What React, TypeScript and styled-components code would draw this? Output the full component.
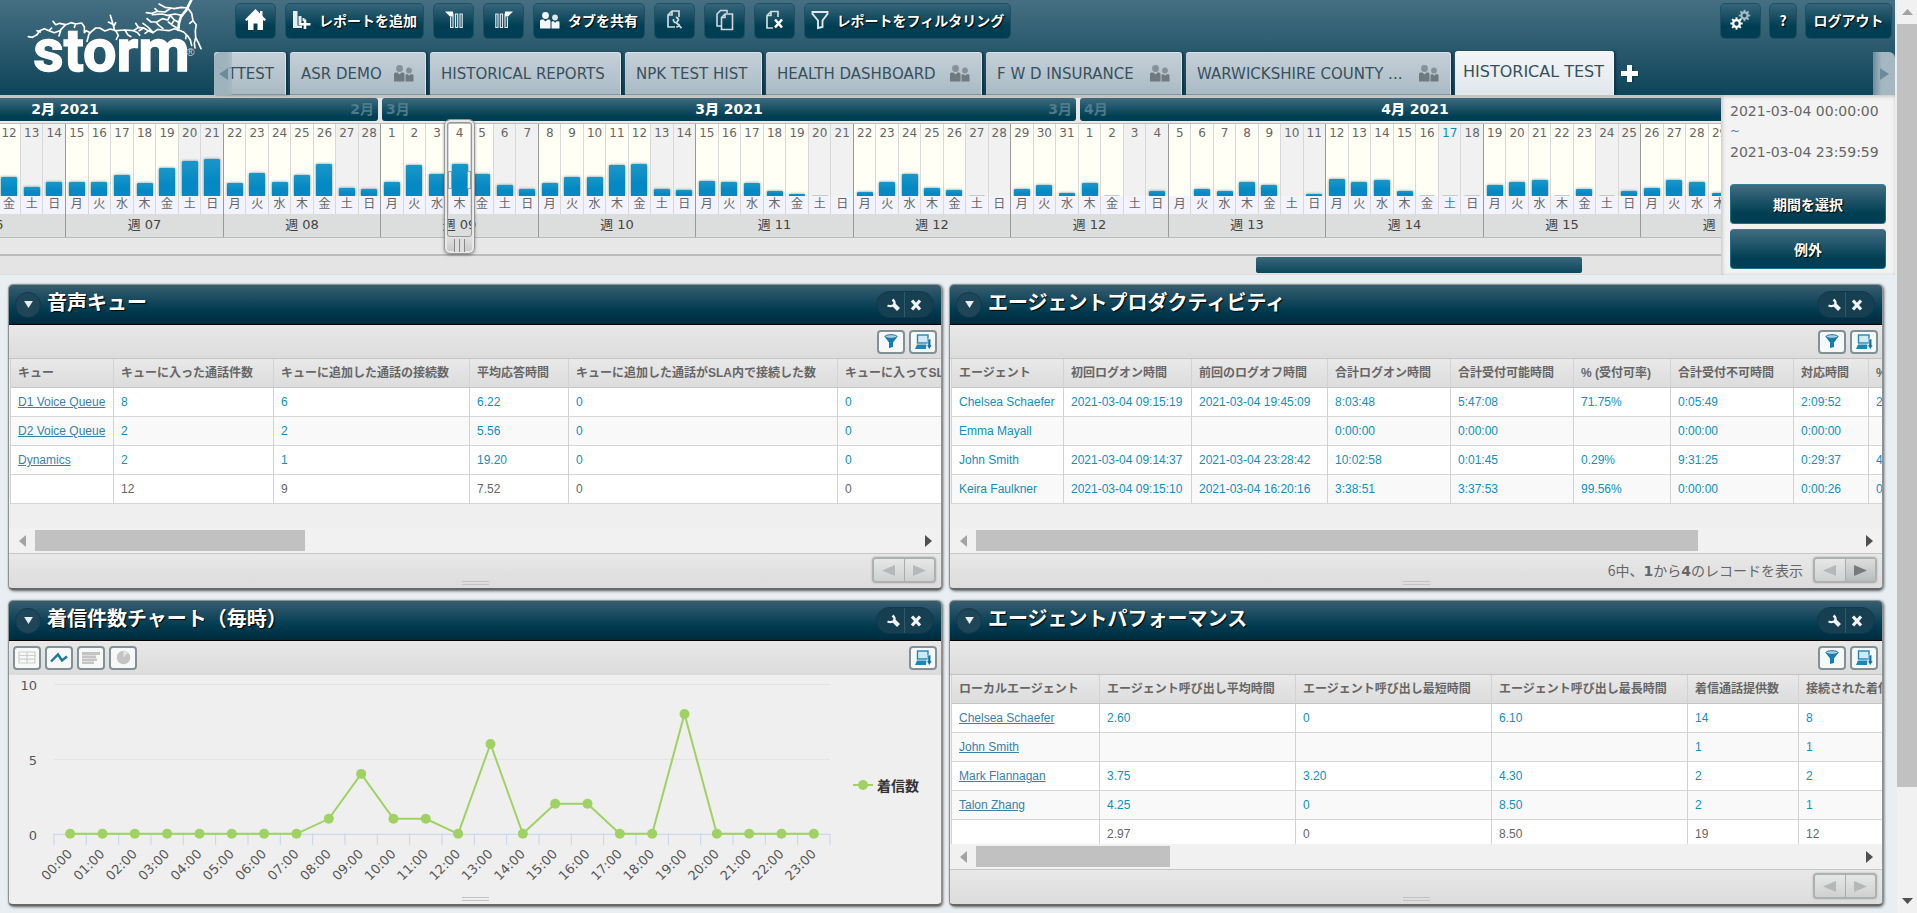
import React from "react";
import styled, { createGlobalStyle, css } from "styled-components";

const uiFont = `"DejaVu Sans", "Noto Sans CJK JP", sans-serif`;
const jpFont = `"Noto Sans CJK JP", "DejaVu Sans", sans-serif`;
const cellFont = `"Liberation Sans", "Noto Sans CJK JP", sans-serif`;

const GlobalStyle = createGlobalStyle`
  * { box-sizing: border-box; }
  body { margin: 0; background: #e9eef2; font-family: ${uiFont}; color: #666; overflow: hidden; }
  button { font: inherit; cursor: pointer; margin: 0; padding: 0; }
  svg { display: block; }
`;

/* ---------- page frame ---------- */

const Page = styled.div`
  display: flex;
  height: 100vh;
  overflow: hidden;
`;

const Main = styled.div`
  flex: 1;
  min-width: 0;
  padding-right: 2px;
`;

const PageScroll = styled.div`
  flex: none;
  width: 20px;
  display: flex;
  flex-direction: column;
  align-items: center;
  background: #f1f1f1;
`;

const PageThumb = styled.div`
  width: 100%;
  flex: 763;
  background: #c1c1c1;
`;

const PageRest = styled.div`
  flex: 102;
`;

const ScrollArrow = styled.button<{ $dim?: boolean }>`
  flex: none;
  width: 20px;
  height: 24px;
  display: grid;
  place-items: center;
  border: 0;
  background: none;
  color: ${(p) => (p.$dim ? "#a3a3a3" : "#505050")};
`;

/* ---------- header ---------- */

const Header = styled.header`
  display: flex;
  height: 95px;
  background: linear-gradient(#466f82, #0e4459);
`;

const LogoBox = styled.a`
  flex: none;
  width: 214px;
  padding-left: 25px;
`;

const HeaderBody = styled.div`
  flex: 1;
  min-width: 0;
  display: flex;
  flex-direction: column;
  justify-content: space-between;
`;

const Toolbar = styled.div`
  display: flex;
  gap: 8px;
  padding: 3px 3px 0 21px;
`;

const Spacer = styled.div`
  flex: 1;
`;

const ToolButton = styled.button<{ $w: number }>`
  width: ${(p) => p.$w}px;
  height: 36px;
  display: flex;
  align-items: center;
  justify-content: center;
  gap: 8px;
  padding-bottom: 2px;
  border: 1px solid #1e4f63;
  border-radius: 5px;
  background: linear-gradient(#38657a, #003f53 65%);
  color: #fff;
  font: bold 14px/20px ${jpFont};
  text-shadow: 1px 1px 1px #000;
  white-space: nowrap;
`;

const ToolGroup = styled.div`
  display: flex;
  gap: 9px;
`;

const TabRow = styled.nav`
  display: flex;
  align-items: flex-end;
  gap: 4px;
  height: 44px;
`;

const TabFirst = styled.div`
  position: relative;
`;

const Tab = styled.button<{ $w: number; $active?: boolean; $end?: boolean }>`
  flex: none;
  width: ${(p) => p.$w}px;
  height: 43px;
  display: flex;
  align-items: center;
  justify-content: ${(p) => (p.$end ? "flex-end" : "space-between")};
  padding: 0 11px;
  border: 0;
  border-top: 1px solid #dbe3e8;
  border-bottom: 1px solid #7f97a3;
  border-right: 1px solid #dbe3e8;
  border-radius: 3px 3px 0 0;
  background: linear-gradient(#c5d0d8, #a9bac4);
  box-shadow: 2px 0 2px rgba(0, 30, 45, 0.5);
  color: #38505c;
  font: 15px/20px ${uiFont};
  white-space: nowrap;
  ${(p) =>
    p.$active &&
    css`
      height: 44px;
      padding: 0 8px 4px;
      background: linear-gradient(#f3f6f8, #dfe7eb);
      border-color: #fff;
      border-bottom: 0;
      font-size: 16px;
    `}
`;

const TabArrowLeft = styled.button`
  position: absolute;
  left: 0;
  top: 0;
  width: 18px;
  height: 43px;
  display: grid;
  place-items: center;
  border: 0;
  border-radius: 6px 0 0 0;
  background: linear-gradient(90deg, #9fb3bd 70%, rgba(159, 179, 189, 0.6));
  color: #6c8c9b;
`;

const TabArrowRight = styled.button`
  width: 22px;
  height: 43px;
  display: grid;
  place-items: center;
  border: 0;
  border-radius: 0 6px 0 0;
  background: linear-gradient(90deg, #6d8c9b, #a5b8c1 40%);
  color: #6c8c9b;
`;

const AddTab = styled.button`
  height: 42px;
  width: 24px;
  display: grid;
  place-items: center;
  border: 0;
  background: none;
`;

/* ---------- timeline ---------- */

const TimeArea = styled.section`
  display: flex;
  height: 180px;
`;

const Timeline = styled.div`
  flex: 1;
  min-width: 0;
  overflow: hidden;
  background: #e7e7e7;
  border-top: 3px solid #c4c4c4;
  display: flex;
  flex-direction: column;
`;

const Months = styled.div`
  display: grid;
  grid-template-columns: 378fr 694fr 641fr;
  gap: 4px;
  height: 23px;
`;

const Month = styled.div`
  overflow: hidden;
  border-radius: 3px;
  background: linear-gradient(#3d6a7e, #003f53 80%);
  display: flex;
  justify-content: flex-end;
  &:nth-child(3) { justify-content: flex-start; border-radius: 3px 0 0 3px; }
  &:nth-child(1) { border-radius: 0 3px 3px 0; }
`;

const MonthInner = styled.div<{ $w?: number }>`
  flex: ${(p) => (p.$w ? "none" : "1")};
  width: ${(p) => (p.$w ? p.$w + "px" : "auto")};
  display: flex;
  justify-content: space-between;
  padding: 0 4px;
  color: #4f7b8c;
  font: bold 14px/22px ${uiFont};
  b { color: #fff; }
`;

const Weeks = styled.div`
  display: grid;
  grid-template-columns: 65fr 158fr 157fr 158fr 157fr 158fr 157fr 158fr 157fr 158fr 157fr 81fr;
  height: 115px;
  margin-top: 2px;
  border-top: 1px solid #bbb;
  border-bottom: 1px solid #bbb;
`;

const Week = styled.div<{ $clip?: "start" | "end" }>`
  min-width: 0;
  display: flex;
  justify-content: ${(p) => (p.$clip === "end" ? "flex-end" : "flex-start")};
  ${(p) => p.$clip && "overflow: hidden;"}
`;

const WeekInner = styled.div<{ $fixed?: boolean }>`
  flex: ${(p) => (p.$fixed ? "none" : "1")};
  width: ${(p) => (p.$fixed ? "158px" : "auto")};
  min-width: 0;
  display: flex;
  flex-direction: column;
  border-left: 1px solid #999;
`;

const Days = styled.div`
  flex: 1;
  display: flex;
`;

const Day = styled.div<{ $off?: boolean; $today?: boolean }>`
  position: relative;
  flex: 1;
  min-width: 0;
  display: flex;
  flex-direction: column;
  align-items: center;
  background: ${(p) => (p.$off ? "#f1f1f1" : "#fffff5")};
  color: ${(p) => (p.$today ? "#0a8ec4" : "#666")};
  border-right: 1px solid #d8d8d8;
  font: 12px/18px ${uiFont};
  &:last-child { border-right: 0; }
`;

const BarSlot = styled.div`
  flex: 1;
  display: flex;
  align-items: flex-end;
  overflow: hidden;
  padding: 0 2px;
`;

const Bar = styled.div<{ $empty: boolean }>`
  width: 16px;
  min-height: 1px;
  border-radius: 1px 1px 0 0;
  background: ${(p) => (p.$empty ? "#c3cbcd" : "linear-gradient(#1b97c8, #0489c4 60%)")};
  box-shadow: ${(p) => (p.$empty ? "none" : "0 0 3px rgba(0, 60, 80, 0.6)")};
`;

const DayName = styled.div`
  align-self: stretch;
  background: #f3f3fd;
  text-align: center;
  line-height: 17px;
  height: 18px;
`;

const WeekName = styled.div`
  height: 23px;
  background: #dcdddd;
  text-align: center;
  color: #444;
  font: 13px/22px ${uiFont};
`;

/* selection window that floats over the day it picks */
const Picker = styled.div`
  position: absolute;
  z-index: 2;
  top: -5px;
  left: -5px;
  right: -5px;
  height: 135px;
  border: 1px solid #999;
  border-radius: 6px;
  background: linear-gradient(transparent 117px, #e2e2e2 117px, #c6c6c6);
  box-shadow: 0 1px 3px rgba(0, 0, 0, 0.4), inset 0 0 0 2px #e9e9e9;
  display: flex;
  flex-direction: column;
  align-items: center;
  justify-content: space-between;
`;

const PickerWindow = styled.div`
  align-self: stretch;
  height: 116px;
  margin: 2px;
  border: 1px solid #999;
  border-radius: 3px;
  display: flex;
  align-items: center;
  justify-content: space-between;
`;

const SideGrip = styled.i`
  width: 4px;
  height: 18px;
  border: 1px solid #999;
  background: #eee;
`;

const Grip = styled.i`
  width: 11px;
  height: 13px;
  margin-bottom: 1px;
  background: repeating-linear-gradient(90deg, #888 0 1px, #ddd 1px 5px);
`;

const SlideTrack = styled.div`
  height: 21px;
  margin-top: auto;
  padding: 1px 0 2px 73%;
  border-top: 2px solid #bbb;
  border-bottom: 1px solid #ddd;
  background: #e4e4e4;
`;

const SlideThumb = styled.div`
  width: 70%;
  height: 16px;
  border-radius: 2px;
  background: linear-gradient(#3a677b, #0b475c);
`;

const RangePanel = styled.aside`
  flex: none;
  width: 174px;
  padding: 4px 9px 0;
  background: #f3f3f3;
  box-shadow: inset 1px 1px 4px #bbb;
  font-size: 14px;
  line-height: 24px;
  white-space: nowrap;
`;

const Tilde = styled.div`
  font-size: 12px;
  line-height: 17px;
  color: #4f7fae;
`;

const RangeButtons = styled.div`
  display: grid;
  gap: 5px;
  margin-top: 20px;
`;

const RangeButton = styled.button`
  height: 40px;
  border: 1px solid #1f7088;
  border-top-color: #2f7f97;
  border-radius: 4px;
  background: linear-gradient(#426c80, #003f53 75%);
  color: #fff;
  font: bold 14px/20px ${jpFont};
  text-shadow: 1px 1px 1px #000;
`;

/* ---------- panels ---------- */

const Board = styled.main`
  display: grid;
  grid-template-columns: minmax(0, 1fr) minmax(0, 1fr);
  gap: 10px 7px;
  padding: 9px 12px 0 8px;
`;

const Panel = styled.section`
  display: flex;
  flex-direction: column;
  height: 306px;
  overflow: hidden;
  border: 1px solid #8b9396;
  border-bottom: 2px solid #666;
  border-radius: 5px;
  background: #efefef;
  box-shadow: 1px 1px 3px rgba(0, 0, 0, 0.6);
`;

const PanelHead = styled.header`
  flex: none;
  display: flex;
  align-items: center;
  height: 40px;
  padding: 0 7px 0 6px;
  border-bottom: 1px solid #000;
  background: linear-gradient(#385d70, #003b50 65%, #002b3e);
`;

const RoundButton = styled.button`
  width: 26px;
  height: 26px;
  display: grid;
  place-items: center;
  border: 1px solid #12384a;
  border-radius: 50%;
  background: #1f4658;
`;

const PanelTitle = styled.h2`
  flex: 1;
  margin: 0 0 5px 6px;
  color: #fff;
  font: bold 20px/28px ${jpFont};
  text-shadow: 1px 1px 1px #000;
  white-space: nowrap;
`;

const Pill = styled.div`
  display: flex;
  width: 58px;
  height: 27px;
  border: 1px solid #12384a;
  border-radius: 14px;
  background: #173f52;
`;

const PillButton = styled.button`
  flex: 1;
  display: grid;
  place-items: center;
  border: 0;
  background: none;
  & + & { border-left: 1px solid #35596a; padding-right: 6px; }
  &:first-child { padding-left: 5px; }
`;

const PanelTools = styled.div<{ $line?: boolean }>`
  flex: none;
  display: flex;
  align-items: center;
  gap: 4px;
  height: 34px;
  padding: 0 4px;
  border-bottom: 1px solid ${(p) => (p.$line ? "#c3c3c3" : "#dcdcdc")};
  background: linear-gradient(#e8e8e8, #dcdcdc);
`;

const IconButton = styled.button`
  width: 28px;
  height: 24px;
  display: grid;
  place-items: center;
  border: 2px solid #839196;
  border-radius: 4px;
  background: #f7f8f8;
`;

const TableWrap = styled.div`
  flex: 1;
  min-height: 0;
  overflow: hidden;
  padding-left: 1px;
`;

const DataTable = styled.table<{ $w: number }>`
  width: ${(p) => p.$w}px;
  table-layout: fixed;
  border-collapse: separate;
  border-spacing: 0;
  border-left: 1px solid #d2d2d2;
`;

const cell = css`
  height: 29px;
  padding: 0 7px;
  text-align: left;
  white-space: nowrap;
  overflow: hidden;
  border-right: 1px solid #d2d2d2;
  border-bottom: 1px solid #d6d6d6;
`;

const Th = styled.th`
  ${cell}
  background: linear-gradient(#e9e9e9, #dcdcdc);
  border-bottom-color: #c6c6c6;
  color: #666;
  font: bold 12px/18px ${cellFont};
`;

const Td = styled.td<{ $total?: boolean }>`
  ${cell}
  color: ${(p) => (p.$total ? "#666" : "#0f8fc3")};
  font: 12px/18px ${cellFont};
`;

const Tr = styled.tr<{ $alt?: boolean }>`
  background: ${(p) => (p.$alt ? "#f9f9f9" : "#fff")};
`;

const CellLink = styled.a`
  color: #3a80ad;
  text-decoration: underline;
`;

const HScroll = styled.div`
  flex: none;
  display: flex;
  align-items: center;
  height: 25px;
  background: #f1f1f1;
`;

const HTrack = styled.div`
  flex: 1;
  height: 21px;
`;

const HThumb = styled.div<{ $pct: number }>`
  width: ${(p) => p.$pct}%;
  height: 21px;
  background: #c1c1c1;
`;

const HArrow = styled(ScrollArrow)`
  width: 26px;
  height: 21px;
`;

const PanelFoot = styled.footer`
  flex: none;
  display: grid;
  grid-template-columns: 1fr auto 1fr;
  align-items: center;
  height: 35px;
  padding: 0 5px 2px;
  border-top: 1px solid #c6c6c6;
  background: linear-gradient(#e8e8e8, #dcdcdc);
`;

const GripBox = styled.div`
  display: grid;
  place-items: end center;
  height: 30px;
`;

const ResizeGrip = styled.div`
  width: 27px;
  height: 4px;
  border: solid #c3c3c3;
  border-width: 1px 0;
`;

const PageInfo = styled.div`
  display: flex;
  align-items: center;
  justify-content: flex-end;
  gap: 10px;
  grid-column: 3;
  color: #666;
  font: 14px/20px ${jpFont};
  b { font-family: ${uiFont}; }
`;

const Pager = styled.div`
  display: flex;
  width: 64px;
  height: 26px;
  border: 2px solid #adb1b2;
  border-radius: 4px;
  background: linear-gradient(#e6e7e7, #cfd1d1);
  box-shadow: 0 0 2px #aaa;
`;

const PagerButton = styled.button<{ $on?: boolean }>`
  flex: 1;
  display: grid;
  place-items: center;
  border: 0;
  background: ${(p) => (p.$on ? "linear-gradient(#dcdede, #b9bcbd)" : "none")};
  color: ${(p) => (p.$on ? "#767a7c" : "#b5b8b9")};
  & + & { border-left: 1px solid #a9adae; }
`;

const ChartBody = styled.div`
  flex: 1;
  min-height: 0;
  display: flex;
  flex-direction: column;
  align-items: center;
  justify-content: space-between;
  padding-bottom: 3px;
`;

const ChartRow = styled.div`
  align-self: stretch;
  display: flex;
`;

const ChartBox = styled.div`
  flex: 1;
  min-width: 0;
`;

const Legend = styled.div`
  display: flex;
  align-items: center;
  gap: 4px;
  padding: 4px 22px 0 5px;
  color: #333;
  font: bold 14px/20px ${jpFont};
`;

/* ---------- icons ---------- */

const Tri = ({ dir, w = 7, h = 12 }: { dir: "l" | "r" | "u" | "d"; w?: number; h?: number }) => {
  const pts = {
    l: `${w},0 0,${h / 2} ${w},${h}`,
    r: `0,0 ${w},${h / 2} 0,${h}`,
    u: `0,${h} ${w / 2},0 ${w},${h}`,
    d: `0,0 ${w},0 ${w / 2},${h}`,
  }[dir];
  return (
    <svg width={w} height={h} fill="currentColor" aria-hidden="true">
      <polygon points={pts} />
    </svg>
  );
};

const HomeIcon = () => (
  <svg width="21" height="22" viewBox="0 0 21 22" fill="#fff">
    <path d="M10.500 0 L0 10.500 L1.500 12 L3 11 V21 H8.500 V14.500 H12.500 V21 H18 V11 L19.500 12 L21 10.500 L17.500 7 V2 H15 V4.500 Z" />
  </svg>
);

const AddReportIcon = () => (
  <svg width="19" height="20" viewBox="0 0 19 20" fill="#e8eef0">
    <path d="M1 1h4.500v17h-4.500z M6.500 6h3v9h-3z M1 15.500h9v2.500h-9z M10.500 8h2v3h-2z" />
    <path d="M13 9.500v9.500 M8.500 14.200h10" stroke="#fff" strokeWidth="2.600" fill="none" />
  </svg>
);

const ColumnsIcon = ({ flip }: { flip?: boolean }) => (
  <svg width="20" height="20" viewBox="0 0 20 20">
    <g transform={flip ? "matrix(-1 0 0 1 20 0)" : undefined}>
      <path d="M1 1.500h8v5h-3z" fill="#fff" />
      <path d="M6.600 7v10.500h2.400v-14 M11.500 4h2.200v13.500h-2.200z M16 4h2.200v13.500h-2.200z" fill="none" stroke="#dfe7ea" strokeWidth="1.200" />
    </g>
  </svg>
);

const PeopleIcon = ({ dark }: { dark?: boolean }) => (
  <svg width="20" height="17" viewBox="0 0 20 17" fill={dark ? "#6f7a80" : "#f4f6f7"}>
    <circle cx="5.500" cy="3.500" r="3.400" opacity={dark ? 0.7 : 1} />
    <path d="M0 9q0-1.500 1.500-1.500h2l2 2 2-2h1.500q1.500 0 1.500 1.500v7.500h-10.500z" />
    <circle cx="15" cy="5.500" r="2.900" opacity={dark ? 0.7 : 0.9} />
    <path d="M11.500 10.500q0-1.300 1.300-1.300h1l1.400 1.600 1.400-1.600h1.400q1.500 0 1.500 1.300v6h-8z" />
  </svg>
);

const PageToolIcon = () => (
  <svg width="18" height="22" viewBox="0 0 18 22" fill="none" stroke="#cfdadf" strokeWidth="1.700">
    <path d="M9 18H2V6L6 2H13V8 M6 2V6H2" />
    <path d="M7.500 10q-.5 3.500 3 3.800l5 5.400 M10.500 13.800l2-3q-.5-2.500-2.800-2.500 M10.500 18.500l3-3.500" />
  </svg>
);

const PagesIcon = () => (
  <svg width="20" height="22" viewBox="0 0 20 22" fill="none" stroke="#cfdadf" strokeWidth="1.600">
    <path d="M6 17H2V5L5.500 1.500H12V4" />
    <path d="M6.500 8.500L10 5H17.500V20.500H6.500Z M10 5V8.500H6.500" />
  </svg>
);

const PageDeleteIcon = () => (
  <svg width="19" height="20" viewBox="0 0 19 20" fill="none" stroke="#cfdadf" strokeWidth="1.700">
    <path d="M8 18H2V5.500L6 1.500H13V7 M6 1.500V5.500H2" />
    <path d="M10 9.500l7 8 M17 9.500l-7 8" stroke="#fff" strokeWidth="2.600" />
  </svg>
);

const FunnelIcon = () => (
  <svg width="18" height="20" viewBox="0 0 18 20" fill="none" stroke="#e2e8ea" strokeWidth="1.900">
    <path d="M1.500 2H16.500V4L11.500 10.500V17L7 18V10.500L1.500 4Z" />
  </svg>
);

const Gear = ({ x, y, r, color }: { x: number; y: number; r: number; color: string }) => (
  <g transform={`translate(${x} ${y})`} stroke={color} fill="none">
    <circle r={r * 0.6} strokeWidth={r * 0.42} />
    {[0, 45, 90, 135, 180, 225, 270, 315].map((a) => (
      <path key={a} d={`M0 ${-r * 0.7}V${-r * 1.1}`} strokeWidth={r * 0.34} transform={`rotate(${a})`} />
    ))}
  </g>
);

const GearsIcon = () => (
  <svg width="21" height="22" viewBox="0 0 21 22">
    <Gear x={14.5} y={6.5} r={5.2} color="#a9bcc5" />
    <Gear x={6.5} y={14.5} r={5.6} color="#fff" />
  </svg>
);

const PlusIcon = () => (
  <svg width="20" height="20" viewBox="0 0 20 20">
    <path d="M8 3h6v5h5v5h-5v5h-6v-5h-5v-5h5z" fill="#0a3040" opacity=".6" />
    <path d="M7 1h5v6h6v5h-6v6h-5v-6h-6v-5h6z" fill="#fff" />
  </svg>
);

const WrenchIcon = () => (
  <svg width="15" height="14" viewBox="0 0 15 14" fill="none" stroke="#f2f2f2">
    <path d="M6.500 1.500Q10 4.500 7.600 7Q5.500 9 1.500 7.500" strokeWidth="2.400" />
    <path d="M8 7L12.500 11.500" strokeWidth="4" />
  </svg>
);

const CrossIcon = () => (
  <svg width="12" height="12" viewBox="0 0 12 12">
    <path d="M2 1.500l8 9 M10 1.500l-8 9" stroke="#f2f2f2" strokeWidth="3.200" />
  </svg>
);

const BlueFunnel = () => (
  <svg width="14" height="15" viewBox="0 0 14 15">
    <path d="M.5 2.500L5 8.500V14L9 13V8.500L13.500 2.500z" fill="#0f7fb4" />
    <ellipse cx="7" cy="2.500" rx="6" ry="1.800" fill="#9fd3ea" stroke="#2b6f93" />
  </svg>
);

const ExportIcon = () => (
  <svg width="17" height="16" viewBox="0 0 17 16">
    <rect x="2.500" y="1" width="10.500" height="8" fill="#cfe9f5" stroke="#2586b3" strokeWidth="1.400" />
    <path d="M2 10.500h9.500l-.5 4.500H0z" fill="#1a86ba" />
    <path d="M12.800 5h3v6h1.200l-2.700 4.500L11.600 11h1.200z" fill="#0b73a8" stroke="#f7f8f8" strokeWidth=".6" />
  </svg>
);

const GridIcon = () => (
  <svg width="18" height="13" viewBox="0 0 18 13" fill="none" stroke="#cdcdcd" strokeWidth="1.200">
    <path d="M1 1h16v11H1z M1 4.500h16 M1 8.200h16 M9 1v11" />
  </svg>
);

const LineIcon = () => (
  <svg width="18" height="12" viewBox="0 0 18 12" fill="none" stroke="#1c789f" strokeWidth="2.400">
    <path d="M1 9.500L8 2.500L12 8.500L17 4.500" />
  </svg>
);

const BarsIcon = () => (
  <svg width="18" height="12" viewBox="0 0 18 12" fill="#c4c4c4">
    <path d="M0 0h18v3H0z M0 3.500h14v2.500H0z M0 6.500h15v2.500H0z M0 9.500h12v2.500H0z" />
  </svg>
);

const PieIcon = () => (
  <svg width="15" height="15" viewBox="0 0 15 15">
    <circle cx="7.500" cy="7.500" r="6.800" fill="#c4c4c4" />
    <path d="M7.500 7.500V.7a6.800 6.800 0 0 1 4.500 1.800z" fill="#e3e3e3" />
  </svg>
);

const Logo = () => (
  <svg width="180" height="80" viewBox="0 0 540 240" role="img" aria-label="storm">
    <g fill="none" stroke="#fff" strokeLinejoin="round" strokeLinecap="round">
      <path strokeWidth="8" d="M499 0L492 14L484 30L468 50L462 68L460 90" />
      <path
        strokeWidth="5"
        d="M460 90L448 86L432 92L412 90L398 88L384 98L370 92L356 84L340 82L326 92L300 90L272 92L256 87L240 93L224 84L212 84L200 94L192 102L186 124"
      />
      <path strokeWidth="5" d="M488 24L500 40L504 62L514 74L511 92L512 112L520 128L528 146M512 112L508 130L510 144M460 90L476 96L488 108L496 120L500 136M484 104L482 116M504 62L494 70" />
      <path strokeWidth="5" d="M488 24L468 22L448 26L438 24L420 22L402 12M438 24L420 36L398 34L380 40L364 38M398 34L390 26M472 46L450 42L428 46L412 42L382 44M464 68L448 60L436 46L428 60L412 56L396 66L378 66L366 56M460 86L440 74L430 66M414 86L402 76L392 66M448 60L440 72" />
      <path strokeWidth="5" d="M384 98L370 82L354 70M372 92L360 100M340 82L332 70M326 92L338 98L344 106M356 84L342 92M300 90L308 104L318 110M272 92L280 106L274 118M268 88L262 66L256 46M262 72L250 66M266 80L272 68" />
      <path strokeWidth="5" d="M196 98L184 92L178 98L178 80L170 69L152 72L138 68L122 74L104 70L92 74L84 64M122 74L108 88L102 108M104 92L88 98L72 92L58 86L44 92L36 104L22 112L10 110M36 92L46 96M72 92L80 84M152 72L148 82" />
    </g>
    <text x="25" y="214" fill="#fff" fontFamily="'Liberation Sans Narrow', Roboto, sans-serif" fontWeight="bold" fontSize="178" stroke="#fff" strokeWidth="4">
      storm
    </text>
    <text x="484" y="169" fill="#c9d6dc" fontFamily="Liberation Sans, sans-serif" fontSize="34">
      ®
    </text>
  </svg>
);

/* ---------- data ---------- */

const dayNames = ["月", "火", "水", "木", "金", "土", "日"];

type DayData = [number, number | null];
type WeekData = { name: string; days: DayData[]; clip?: "start" | "end" };

const weeks: WeekData[] = [
  { name: "週 06", clip: "end", days: [[8, 12], [9, 15], [10, 15], [11, 14], [12, 19], [13, 9], [14, 14]] },
  { name: "週 07", days: [[15, 14], [16, 14], [17, 21], [18, 13], [19, 28], [20, 35], [21, 37]] },
  { name: "週 08", days: [[22, 13], [23, 23], [24, 14], [25, 21], [26, 32], [27, 8], [28, 7]] },
  { name: "週 09", days: [[1, 14], [2, 31], [3, 22], [4, 32], [5, 22], [6, 11], [7, 7]] },
  { name: "週 10", days: [[8, 13], [9, 19], [10, 19], [11, 31], [12, 32], [13, 7], [14, 6]] },
  { name: "週 11", days: [[15, 15], [16, 14], [17, 13], [18, 5], [19, 2], [20, 0], [21, null]] },
  { name: "週 12", days: [[22, 4], [23, 14], [24, 22], [25, 8], [26, 6], [27, 0], [28, null]] },
  { name: "週 12", days: [[29, 7], [30, 11], [31, 3], [1, 13], [2, 0], [3, null], [4, 5]] },
  { name: "週 13", days: [[5, null], [6, 7], [7, 5], [8, 14], [9, 11], [10, null], [11, 2]] },
  { name: "週 14", days: [[12, 17], [13, 14], [14, 16], [15, 5], [16, 0], [17, 0], [18, 0]] },
  { name: "週 15", days: [[19, 11], [20, 14], [21, 16], [22, 0], [23, 7], [24, 0], [25, 5]] },
  { name: "週 16", clip: "start", days: [[26, 8], [27, 16], [28, 14], [29, 3], [30, 9], [1, 0], [2, 0]] },
];

type TableData = {
  cols: [string, number][];
  rows: string[][];
  links?: boolean;
  total?: boolean;
};

const queueTable: TableData = {
  cols: [
    ["キュー", 103],
    ["キューに入った通話件数", 160],
    ["キューに追加した通話の接続数", 196],
    ["平均応答時間", 99],
    ["キューに追加した通話がSLA内で接続した数", 269],
    ["キューに入ってSLA内で接続した通話", 260],
  ],
  links: true,
  total: true,
  rows: [
    ["D1 Voice Queue", "8", "6", "6.22", "0", "0"],
    ["D2 Voice Queue", "2", "2", "5.56", "0", "0"],
    ["Dynamics", "2", "1", "19.20", "0", "0"],
    ["", "12", "9", "7.52", "0", "0"],
  ],
};

const productivityTable: TableData = {
  cols: [
    ["エージェント", 112],
    ["初回ログオン時間", 128],
    ["前回のログオフ時間", 136],
    ["合計ログオン時間", 123],
    ["合計受付可能時間", 123],
    ["% (受付可率)", 97],
    ["合計受付不可時間", 123],
    ["対応時間", 75],
    ["% (対応率)", 97],
  ],
  rows: [
    ["Chelsea Schaefer", "2021-03-04 09:15:19", "2021-03-04 19:45:09", "8:03:48", "5:47:08", "71.75%", "0:05:49", "2:09:52", "26.84%"],
    ["Emma Mayall", "", "", "0:00:00", "0:00:00", "", "0:00:00", "0:00:00", ""],
    ["John Smith", "2021-03-04 09:14:37", "2021-03-04 23:28:42", "10:02:58", "0:01:45", "0.29%", "9:31:25", "0:29:37", "4.91%"],
    ["Keira Faulkner", "2021-03-04 09:15:10", "2021-03-04 16:20:16", "3:38:51", "3:37:53", "99.56%", "0:00:00", "0:00:26", "0.20%"],
  ],
};

const performanceTable: TableData = {
  cols: [
    ["ローカルエージェント", 148],
    ["エージェント呼び出し平均時間", 196],
    ["エージェント呼び出し最短時間", 196],
    ["エージェント呼び出し最長時間", 196],
    ["着信通話提供数", 111],
    ["接続された着信通話数", 160],
  ],
  links: true,
  total: true,
  rows: [
    ["Chelsea Schaefer", "2.60", "0", "6.10", "14", "8"],
    ["John Smith", "", "", "", "1", "1"],
    ["Mark Flannagan", "3.75", "3.20", "4.30", "2", "2"],
    ["Talon Zhang", "4.25", "0", "8.50", "2", "1"],
    ["", "2.97", "0", "8.50", "19", "12"],
  ],
};

const callsPerHour = [0, 0, 0, 0, 0, 0, 0, 0, 1, 4, 1, 1, 0, 6, 0, 2, 2, 0, 0, 8, 0, 0, 0, 0];

/* ---------- parts ---------- */

const ReportTable = ({ data }: { data: TableData }) => (
  <TableWrap>
    <DataTable $w={data.cols.reduce((s, c) => s + c[1], 1)}>
      <colgroup>
        {data.cols.map(([name, w]) => (
          <col key={name} width={w} />
        ))}
      </colgroup>
      <thead>
        <tr>
          {data.cols.map(([name]) => (
            <Th key={name} scope="col">{name}</Th>
          ))}
        </tr>
      </thead>
      <tbody>
        {data.rows.map((row, r) => {
          const total = data.total && r === data.rows.length - 1;
          return (
            <Tr key={r} $alt={!total && r % 2 === 1}>
              {row.map((v, c) => (
                <Td key={c} $total={total}>
                  {c === 0 && data.links && v ? <CellLink href="#">{v}</CellLink> : v}
                </Td>
              ))}
            </Tr>
          );
        })}
      </tbody>
    </DataTable>
  </TableWrap>
);

const PanelHeader = ({ title }: { title: string }) => (
  <PanelHead>
    <RoundButton aria-label="折りたたむ">
      <svg width="9" height="7" viewBox="0 0 10 8"><polygon points="0,0 10,0 5,8" fill="#e9edef" /></svg>
    </RoundButton>
    <PanelTitle>{title}</PanelTitle>
    <Pill>
      <PillButton aria-label="設定"><WrenchIcon /></PillButton>
      <PillButton aria-label="閉じる"><CrossIcon /></PillButton>
    </Pill>
  </PanelHead>
);

type TablePanelProps = { title: string; data: TableData; thumb: number; info?: React.ReactNode; next?: boolean };

const TablePanel = ({ title, data, thumb, info, next }: TablePanelProps) => (
  <Panel>
    <PanelHeader title={title} />
    <PanelTools $line>
      <Spacer />
      <IconButton aria-label="フィルター"><BlueFunnel /></IconButton>
      <IconButton aria-label="エクスポート"><ExportIcon /></IconButton>
    </PanelTools>
    <ReportTable data={data} />
    <HScroll>
      <HArrow $dim aria-label="左へ"><Tri dir="l" /></HArrow>
      <HTrack><HThumb $pct={thumb} /></HTrack>
      <HArrow aria-label="右へ"><Tri dir="r" /></HArrow>
    </HScroll>
    <PanelFoot>
      <span />
      <GripBox><ResizeGrip /></GripBox>
      <PageInfo>
        {info}
        <Pager>
          <PagerButton aria-label="前へ"><Tri dir="l" w={13} h={11} /></PagerButton>
          <PagerButton $on={next} aria-label="次へ"><Tri dir="r" w={13} h={11} /></PagerButton>
        </Pager>
      </PageInfo>
    </PanelFoot>
  </Panel>
);

const CallChart = () => {
  const left = 45;
  const step = 777 / 24;
  const base = 159;
  const pts = callsPerHour.map((v, i) => [left + step * (i + 0.5), base - v * 15]);
  return (
    <svg width="100%" viewBox="0 0 840 216" role="img" aria-label="着信数">
      {[10, 5].map((v) => (
        <path key={v} d={`M${left} ${base - v * 15 + 0.5}H822`} stroke="#e3e3e6" />
      ))}
      {[10, 5, 0].map((v) => (
        <text key={v} x="28" y={base - v * 15 + 6} textAnchor="end" fontFamily="DejaVu Sans" fontSize="13" fill="#505860">{v}</text>
      ))}
      <path d={`M${left} ${base + 0.5}H822`} stroke="#c5d3ea" />
      {Array.from({ length: 25 }, (_, i) => (
        <path key={i} d={`M${left + step * i} ${base}v11`} stroke="#c5d3ea" />
      ))}
      {pts.map(([x], i) => (
        <text
          key={i}
          transform={`translate(${x + 3} 180) rotate(-45)`}
          textAnchor="end"
          fontFamily="DejaVu Sans"
          fontSize="13"
          fill="#555"
        >
          {`${String(i).padStart(2, "0")}:00`}
        </text>
      ))}
      <polyline points={pts.map((p) => p.join(",")).join(" ")} fill="none" stroke="#9fd163" strokeWidth="2" />
      {pts.map(([x, y], i) => (
        <circle key={i} cx={x} cy={y} r="5" fill="#9fd163" />
      ))}
    </svg>
  );
};

const TimelineView = () => (
  <Timeline>
    <Months>
      <Month><MonthInner $w={626}><span>2月</span><b>2月 2021</b><span>2月</span></MonthInner></Month>
      <Month><MonthInner><span>3月</span><b>3月 2021</b><span>3月</span></MonthInner></Month>
      <Month><MonthInner $w={670}><span>4月</span><b>4月 2021</b><span>4月</span></MonthInner></Month>
    </Months>
    <Weeks>
      {weeks.map((w, wi) => (
        <Week key={wi} $clip={w.clip}>
          <WeekInner $fixed={!!w.clip}>
            <Days>
              {w.days.map(([num, h], di) => (
                <Day key={di} $off={di > 4} $today={wi === 9 && num === 17}>
                  {num}
                  <BarSlot>{h !== null && <Bar $empty={h === 0} style={{ height: h }} />}</BarSlot>
                  <DayName>{dayNames[di]}</DayName>
                  {wi === 3 && num === 4 && (
                    <Picker>
                      <PickerWindow><SideGrip /><SideGrip /></PickerWindow>
                      <Grip />
                    </Picker>
                  )}
                </Day>
              ))}
            </Days>
            <WeekName>{w.name}</WeekName>
          </WeekInner>
        </Week>
      ))}
    </Weeks>
    <SlideTrack><SlideThumb /></SlideTrack>
  </Timeline>
);

const tabs: { label: string; w: number; shared?: boolean; active?: boolean }[] = [
  { label: "ASR DEMO", w: 136, shared: true },
  { label: "HISTORICAL REPORTS", w: 191 },
  { label: "NPK TEST HIST", w: 137 },
  { label: "HEALTH DASHBOARD", w: 216, shared: true },
  { label: "F W D INSURANCE", w: 196, shared: true },
  { label: "WARWICKSHIRE COUNTY ...", w: 265, shared: true },
  { label: "HISTORICAL TEST", w: 159, active: true },
];

export default function App() {
  return (
    <>
      <GlobalStyle />
      <Page>
        <Main>
          <Header>
            <LogoBox href="#"><Logo /></LogoBox>
            <HeaderBody>
              <Toolbar>
                <ToolGroup>
                  <ToolButton $w={41} aria-label="ホーム"><HomeIcon /></ToolButton>
                  <ToolButton $w={139}><AddReportIcon />レポートを追加</ToolButton>
                  <ToolButton $w={41} aria-label="列を左に追加"><ColumnsIcon /></ToolButton>
                  <ToolButton $w={41} aria-label="列を右に追加"><ColumnsIcon flip /></ToolButton>
                  <ToolButton $w={112}><PeopleIcon />タブを共有</ToolButton>
                  <ToolButton $w={41} aria-label="タブを編集"><PageToolIcon /></ToolButton>
                  <ToolButton $w={41} aria-label="タブをコピー"><PagesIcon /></ToolButton>
                  <ToolButton $w={41} aria-label="タブを削除"><PageDeleteIcon /></ToolButton>
                  <ToolButton $w={207}><FunnelIcon />レポートをフィルタリング</ToolButton>
                </ToolGroup>
                <Spacer />
                <ToolButton $w={41} aria-label="設定"><GearsIcon /></ToolButton>
                <ToolButton $w={28}>?</ToolButton>
                <ToolButton $w={87}>ログアウト</ToolButton>
              </Toolbar>
              <TabRow>
                <TabFirst>
                  <Tab $w={72} $end>TTEST</Tab>
                  <TabArrowLeft aria-label="前のタブ"><Tri dir="l" w={9} h={12} /></TabArrowLeft>
                </TabFirst>
                {tabs.map((t) => (
                  <Tab key={t.label} $w={t.w} $active={t.active}>
                    {t.label}
                    {t.shared && <PeopleIcon dark />}
                  </Tab>
                ))}
                <AddTab aria-label="タブを追加"><PlusIcon /></AddTab>
                <Spacer />
                <TabArrowRight aria-label="次のタブ"><Tri dir="r" w={9} h={12} /></TabArrowRight>
              </TabRow>
            </HeaderBody>
          </Header>
          <TimeArea>
            <TimelineView />
            <RangePanel>
              <div>2021-03-04 00:00:00</div>
              <Tilde>~</Tilde>
              <div>2021-03-04 23:59:59</div>
              <RangeButtons>
                <RangeButton>期間を選択</RangeButton>
                <RangeButton>例外</RangeButton>
              </RangeButtons>
            </RangePanel>
          </TimeArea>
          <Board>
            <TablePanel title="音声キュー" data={queueTable} thumb={30.7} />
            <TablePanel
              title="エージェントプロダクティビティ"
              data={productivityTable}
              thumb={82}
              next
              info={<span>6中、<b>1</b>から<b>4</b>のレコードを表示</span>}
            />
            <Panel>
              <PanelHeader title="着信件数チャート（毎時）" />
              <PanelTools>
                <IconButton aria-label="表"><GridIcon /></IconButton>
                <IconButton aria-label="折れ線"><LineIcon /></IconButton>
                <IconButton aria-label="棒"><BarsIcon /></IconButton>
                <IconButton aria-label="円"><PieIcon /></IconButton>
                <Spacer />
                <IconButton aria-label="エクスポート"><ExportIcon /></IconButton>
              </PanelTools>
              <ChartBody>
                <ChartRow>
                  <ChartBox><CallChart /></ChartBox>
                  <Legend>
                    <svg width="20" height="10" viewBox="0 0 20 10">
                      <path d="M0 5h20" stroke="#9fd163" strokeWidth="2" />
                      <circle cx="10" cy="5" r="5" fill="#9fd163" />
                    </svg>
                    着信数
                  </Legend>
                </ChartRow>
                <ResizeGrip />
              </ChartBody>
            </Panel>
            <TablePanel title="エージェントパフォーマンス" data={performanceTable} thumb={22} />
          </Board>
        </Main>
        <PageScroll>
          <ScrollArrow $dim aria-label="上へ"><Tri dir="u" w={11} h={6} /></ScrollArrow>
          <PageThumb />
          <PageRest />
          <ScrollArrow aria-label="下へ"><Tri dir="d" w={11} h={6} /></ScrollArrow>
        </PageScroll>
      </Page>
    </>
  );
}
